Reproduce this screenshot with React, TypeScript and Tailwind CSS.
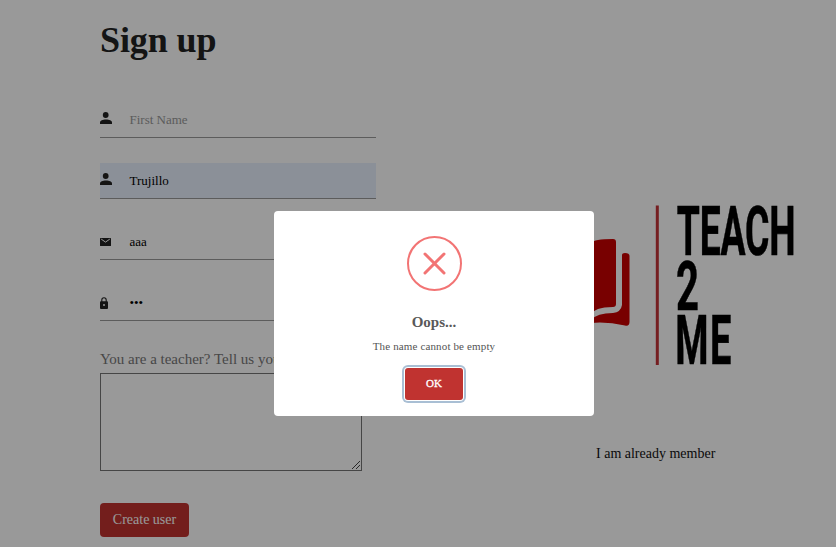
import type { ReactNode } from "react";

function PersonIcon() {
  return (
    <svg className="block h-3 w-3" viewBox="0 0 12 12" fill="#222">
      <ellipse cx="5.7" cy="3" rx="2.9" ry="3" />
      <path d="M0 12V10.2C0 8.5 2.6 7.4 6 7.4s6 1.1 6 2.8V12Z" />
    </svg>
  );
}

function MailIcon() {
  return (
    <svg className="block h-2 w-[11px]" viewBox="0 0 11 8">
      <rect width="11" height="8" rx=".5" fill="#222" />
      <path d="M1.2 1.1 5.5 4.1 9.8 1.1" fill="none" stroke="#fff" strokeWidth="1" />
    </svg>
  );
}

function LockIcon() {
  return (
    <svg className="block h-3 w-2" viewBox="0 0 8 12">
      <path d="M1.8 5V3a2.2 2.3 0 0 1 4.4 0v2" fill="none" stroke="#222" strokeWidth="1.1" />
      <rect y="4.2" width="8" height="7.8" rx="1" fill="#222" />
      <circle cx="4" cy="8" r="1" fill="#fff" />
    </svg>
  );
}

type FieldProps = { icon: ReactNode; value: string; tone?: string; box?: string };

function Field({ icon, value, tone = "text-black", box = "" }: FieldProps) {
  return (
    <div className={`flex h-9 w-[276px] items-center border-b border-[#999] ${box}`}>
      <span className="w-[29.5px] shrink-0">{icon}</span>
      <span className={`text-[13px] leading-4 ${tone}`}>{value}</span>
    </div>
  );
}

function Logo() {
  return (
    <svg className="block h-[170px] w-[290px] overflow-visible" viewBox="510 200 290 170">
      <g fill="#c80000">
        <path d="M564 245q0-3 3-4 22-4 24 2 3-4 22-4 3 0 3 3v62q0 3-3 3-19 0-22 8-3-8-24-8-3 0-3-3Z" />
        <path d="M622 255q0-2 3-2 4.5 0 4.5 3v66q0 4.5-4.5 3.5-18-4-34-2.5-15-1.5-31 2.5-5 1-5-3.5v-66q0-3 4-3 2 0 2 2v50q1 8 9 8 16 1 21 7 6-7 22-7 8-1 9-8Z" />
      </g>
      <rect x="655.8" y="205.5" width="3" height="159.5" fill="#c33337" />
      <g
        fontFamily="Roboto, 'Liberation Sans', sans-serif"
        fontSize="69"
        fontWeight="700"
        fill="#000"
        stroke="#000"
        strokeWidth=".6"
      >
        <text transform="translate(676.8 255.3) scale(.54 1)" textLength="220" lengthAdjust="spacing">TEACH</text>
        <text transform="translate(676 310.3) scale(.58 1)">2</text>
        <text transform="translate(675.3 364.2) scale(.55 1)" textLength="102" lengthAdjust="spacing">ME</text>
      </g>
    </svg>
  );
}

function ErrorDialog() {
  return (
    <div className="absolute inset-0 flex items-start justify-center bg-black/40 pl-8 pt-[211px]">
      <div className="flex h-[205px] w-80 flex-col items-center rounded-[4px] bg-white pt-[25px]">
        <svg className="block h-[55px] w-[55px] shrink-0" viewBox="0 0 55 55" fill="none" stroke="#f27474">
          <circle cx="27.5" cy="27.5" r="26.5" strokeWidth="2" />
          <path d="m18 18 19 19M37 18 18 37" strokeWidth="3" strokeLinecap="round" />
        </svg>
        <h2 className="mt-[22px] text-[15px] font-bold leading-[18px] text-[#595959]">Oops...</h2>
        <p className="mt-[7px] text-[11px] leading-4 tracking-[0.14px] text-[#545454]">The name cannot be empty</p>
        <button className="mt-[14px] flex h-8 w-[58px] items-center justify-center rounded-[3px] bg-[#c03330] pb-[2px] text-[11px] text-white shadow-[0_0_0_1px_#fff,0_0_0_3px_#a9bfd4] [-webkit-text-stroke:0.3px_white]">
          OK
        </button>
      </div>
    </div>
  );
}

export default function App() {
  return (
    <div className="relative h-[547px] w-[836px] overflow-hidden bg-white font-['Liberation_Serif',serif]">
      <div className="flex pl-[100px]">
        <form className="w-[410px] shrink-0 pt-[18px]">
          <h1 className="text-[36px] font-bold leading-[44px] tracking-[-0.1px] text-[#222]">Sign up</h1>
          <div className="mt-10 flex flex-col gap-[25px]">
            <Field icon={<div className="-mt-1"><PersonIcon /></div>} value="First Name" tone="text-[#999]" />
            <Field icon={<div className="-mt-1"><PersonIcon /></div>} value="Trujillo" box="bg-[#e8f0fe]" />
            <Field icon={<MailIcon />} value="aaa" />
            <Field icon={<LockIcon />} value="•••" />
          </div>
          <p className="mt-[29px] text-[15px] leading-[18px] text-[#777]">You are a teacher? Tell us your skills</p>
          <div className="mt-[5px] flex h-[98px] w-[262px] items-end justify-end border border-[#767676] p-px">
            <svg className="h-2 w-2" viewBox="0 0 8 8" stroke="#444" strokeWidth="1">
              <path d="M0 8 8 0M4 8l4-4" />
            </svg>
          </div>
          <button className="mt-8 flex h-[34px] w-[89px] items-center justify-center rounded-[4px] bg-[#c03330] pb-[2px] text-[14px] text-white">
            Create user
          </button>
        </form>
        <aside className="flex w-[290px] shrink-0 flex-col pt-[200px]">
          <Logo />
          <a className="ml-[86px] mt-[75px] text-[14px] leading-[18px] text-[#111]">I am already member</a>
        </aside>
      </div>
      <ErrorDialog />
    </div>
  );
}
